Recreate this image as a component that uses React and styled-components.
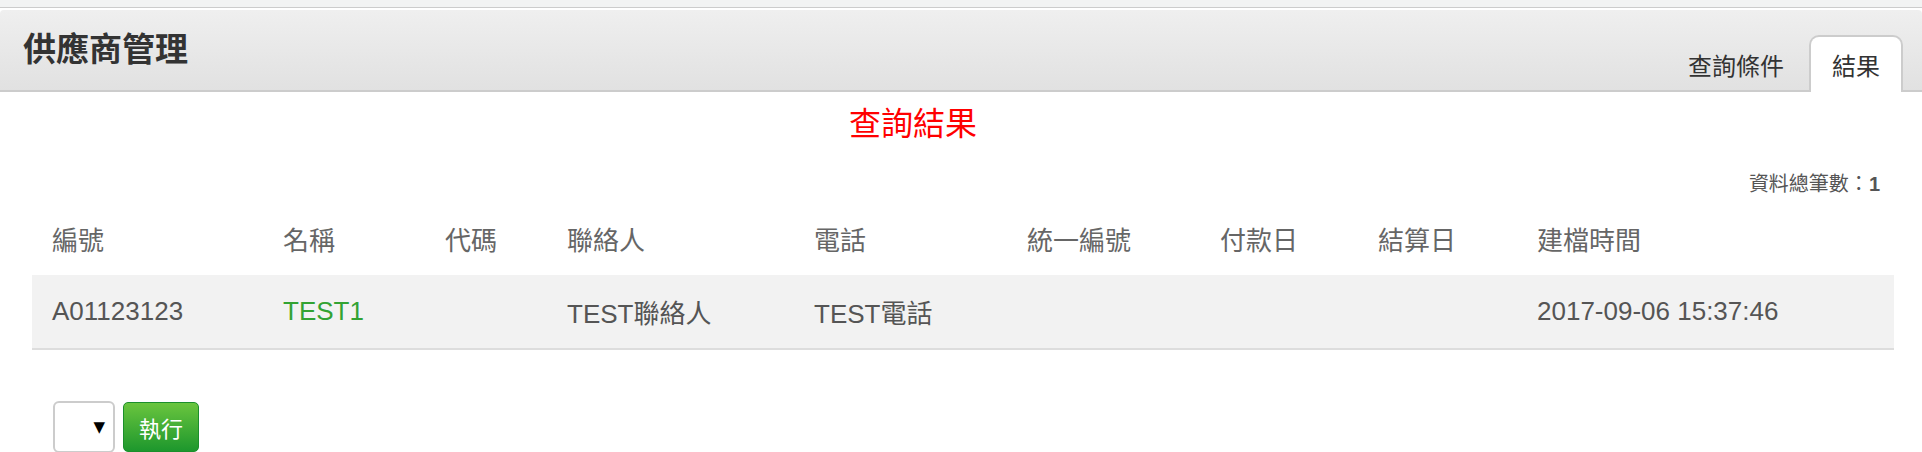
import React from 'react';
import styled, { createGlobalStyle } from 'styled-components';

const GlobalStyle = createGlobalStyle`
  html, body {
    margin: 0;
    padding: 0;
    background: #fff;
  }
  body {
    font-family: "Liberation Sans", "Noto Sans CJK TC", sans-serif;
    color: #555;
  }
`;

const TopStrip = styled.div`
  height: 7px;
  background: #f2f3f3;
  border-bottom: 1px solid #ccc;
`;

const Header = styled.div`
  margin-top: 2px;
  height: 80px;
  display: flex;
  align-items: stretch;
  justify-content: space-between;
  background: linear-gradient(to bottom, #efefef, #e1e1e1);
  border-bottom: 2px solid #ccc;
  border-radius: 4px 4px 0 0;
  padding: 0 19px 0 23px;
`;

const Title = styled.h1`
  margin: 0;
  align-self: center;
  font-size: 33px;
  line-height: 40px;
  font-weight: bold;
  color: #333;
`;

const Tabs = styled.div`
  display: flex;
  align-items: flex-end;
  gap: 2px;
  margin-bottom: -2px;
`;

const Tab = styled.div`
  height: 57px;
  box-sizing: border-box;
  padding: 0 21px;
  display: flex;
  align-items: center;
  font-size: 24px;
  color: #333;
  border: 2px solid ${p => (p.active ? '#ccc' : 'transparent')};
  border-bottom: none;
  border-radius: 10px 10px 0 0;
  background: ${p => (p.active ? '#fff' : 'transparent')};
`;

const Content = styled.div`
  padding: 0 28px 0 32px;
`;

const ResultTitle = styled.div`
  margin-top: 12px;
  padding-right: 100px;
  text-align: center;
  font-size: 32px;
  line-height: 40px;
  color: #f00;
`;

const Count = styled.div`
  margin-top: 26px;
  padding-right: 14px;
  text-align: right;
  font-size: 20px;
  line-height: 28px;
  color: #555;

  b {
    font-weight: bold;
  }
`;

const Table = styled.table`
  margin-top: 4px;
  width: 100%;
  border-collapse: collapse;
  table-layout: fixed;
  font-size: 26px;
`;

const HeadCell = styled.th`
  height: 73px;
  padding: 0 0 0 20px;
  text-align: left;
  font-weight: normal;
  color: #666;
`;

const Row = styled.tr`
  background: #f2f2f2;
  border-bottom: 2px solid #ddd;
`;

const Cell = styled.td`
  height: 73px;
  padding: 0 0 0 20px;
  color: ${p => (p.green ? '#33a333' : '#555')};
`;

const Actions = styled.div`
  margin-top: 51px;
  padding-left: 21px;
  display: flex;
  align-items: flex-start;
  gap: 8px;
`;

const SelectWrap = styled.div`
  position: relative;
  width: 62px;
  height: 52px;
`;

const Select = styled.select`
  appearance: none;
  width: 100%;
  height: 100%;
  box-sizing: border-box;
  border: 2px solid #ccc;
  border-radius: 6px;
  background: #fff;
`;

const Arrow = styled.span`
  position: absolute;
  right: 10px;
  top: 0;
  bottom: 0;
  display: flex;
  align-items: center;
  font-family: "DejaVu Sans", sans-serif;
  font-size: 15px;
  color: #000;
  pointer-events: none;
`;

const RunButton = styled.button`
  margin-top: 1px;
  width: 76px;
  height: 50px;
  border: 1px solid #1b8f2c;
  border-radius: 5px;
  background: linear-gradient(to bottom, #6ac53e, #1d972d);
  color: #fff;
  font-family: inherit;
  font-size: 22px;
`;

const columns = [
  { key: 'id', label: '編號', width: 231 },
  { key: 'name', label: '名稱', width: 162 },
  { key: 'code', label: '代碼', width: 122 },
  { key: 'contact', label: '聯絡人', width: 247 },
  { key: 'phone', label: '電話', width: 213 },
  { key: 'taxId', label: '統一編號', width: 193 },
  { key: 'payDay', label: '付款日', width: 158 },
  { key: 'closeDay', label: '結算日', width: 159 },
  { key: 'created', label: '建檔時間' },
];

const rows = [
  {
    id: 'A01123123',
    name: 'TEST1',
    code: '',
    contact: 'TEST聯絡人',
    phone: 'TEST電話',
    taxId: '',
    payDay: '',
    closeDay: '',
    created: '2017-09-06 15:37:46',
  },
];

export default function App() {
  return (
    <>
      <GlobalStyle />
      <TopStrip />
      <Header>
        <Title>供應商管理</Title>
        <Tabs>
          <Tab>查詢條件</Tab>
          <Tab active>結果</Tab>
        </Tabs>
      </Header>
      <Content>
        <ResultTitle>查詢結果</ResultTitle>
        <Count>
          資料總筆數：<b>1</b>
        </Count>
        <Table>
          <colgroup>
            {columns.map(c => (
              <col key={c.key} style={c.width ? { width: c.width } : undefined} />
            ))}
          </colgroup>
          <thead>
            <tr>
              {columns.map(c => (
                <HeadCell key={c.key}>{c.label}</HeadCell>
              ))}
            </tr>
          </thead>
          <tbody>
            {rows.map(r => (
              <Row key={r.id}>
                {columns.map(c => (
                  <Cell key={c.key} green={c.key === 'name'}>
                    {r[c.key]}
                  </Cell>
                ))}
              </Row>
            ))}
          </tbody>
        </Table>
        <Actions>
          <SelectWrap>
            <Select />
            <Arrow>▼</Arrow>
          </SelectWrap>
          <RunButton>執行</RunButton>
        </Actions>
      </Content>
    </>
  );
}
